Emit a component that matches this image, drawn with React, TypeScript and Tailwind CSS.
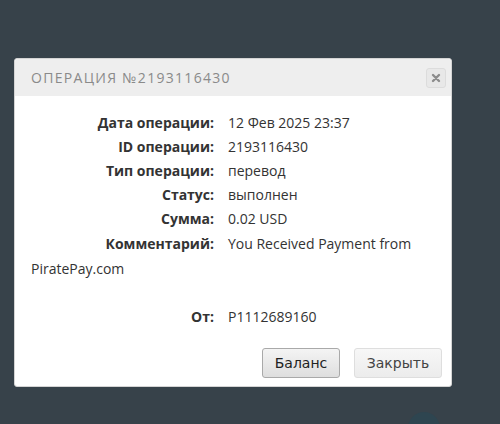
import React from "react";

const rows: [string, string][] = [
  ["Дата операции:", "12 Фев 2025 23:37"],
  ["ID операции:", "2193116430"],
  ["Тип операции:", "перевод"],
  ["Статус:", "выполнен"],
  ["Сумма:", "0.02 USD"],
];

export default function App() {
  return (
    <div className="relative w-[500px] h-[424px] bg-[#37424a] overflow-hidden pt-[58px] pl-[14px]" style={{ fontFamily: "'Open Sans', 'Liberation Sans', sans-serif" }}>
      <div className="absolute left-[408px] top-[412px] w-[32px] h-[32px] rounded-full bg-[#2e4550]" />
      <div className="relative w-[438px] h-[329px] bg-white rounded-[3px] border border-[#d4d4d4] flex flex-col">
        <div className="h-[37px] bg-[#eeeeee] rounded-t-[3px] flex items-center justify-between pl-[16px] pr-[4px]">
          <span className="text-[14px] tracking-[1.3px] text-[#8a8a8a]">ОПЕРАЦИЯ №2193116430</span>
          <button className="w-[20px] h-[20px] mr-[1px] rounded-[3px] border border-[#dcdcdc] bg-[#e8e8e8] flex items-center justify-center">
            <svg width="10" height="10" viewBox="0 0 10 10">
              <path d="M2 2 L8 8 M8 2 L2 8" stroke="#8c8c8c" strokeWidth="2.4" strokeLinecap="round" />
            </svg>
          </button>
        </div>
        <div className="pl-[16px] pr-[20px] pt-[15px] text-[14px] leading-[24px] text-[#333]">
          {rows.map(([l, v]) => (
            <div key={l} className="flex">
              <span className="w-[183px] text-right font-bold">{l}</span>
              <span className="ml-[14px]">{v}</span>
            </div>
          ))}
          <p className="leading-[25px]">
            <b className="inline-block w-[183px] text-right font-bold mr-[14px]">Комментарий:</b>
            You Received Payment from PiratePay.com
          </p>
          <div className="h-[24px]" />
          <div className="flex">
            <span className="w-[183px] text-right font-bold">От:</span>
            <span className="ml-[14px]">P1112689160</span>
          </div>
        </div>
        <div className="mt-auto mb-[8px] flex justify-end gap-[14px] pr-[9px]" style={{ fontFamily: "'DejaVu Sans', sans-serif" }}>
          <button className="w-[78px] h-[30px] rounded-[3px] border border-[#a9a9a9] bg-gradient-to-b from-[#f4f4f4] to-[#dedede] text-[14px] text-[#222]">Баланс</button>
          <button className="w-[88px] h-[30px] rounded-[3px] border border-[#dedede] bg-gradient-to-b from-[#f7f7f7] to-[#ececec] text-[14px] text-[#444]">Закрыть</button>
        </div>
      </div>
    </div>
  );
}
